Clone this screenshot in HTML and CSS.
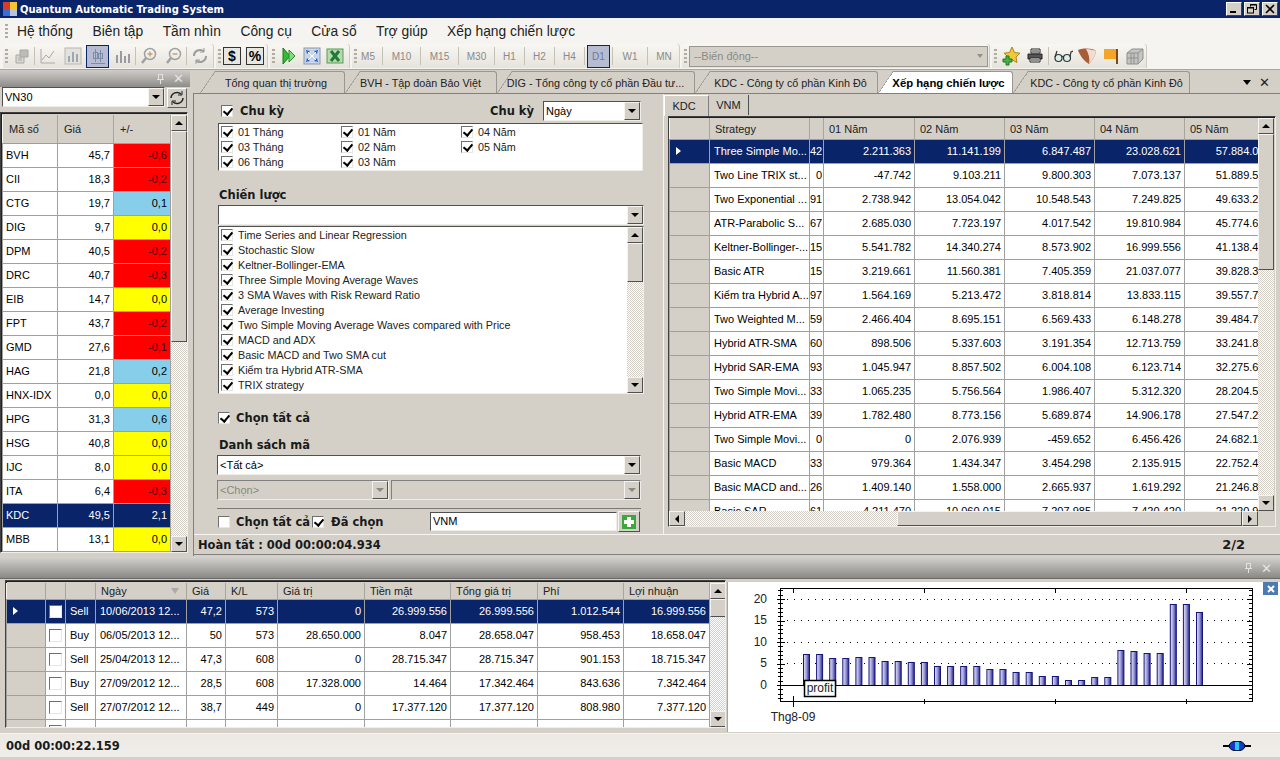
FILE: index.html
```html
<!DOCTYPE html>
<html lang="vi">
<head>
    <meta charset="utf-8">
    <title>Quantum Automatic Trading System</title>
    <link rel="stylesheet" href="styles.css">
</head>
<body>
<div class="app">

    <div class="titlebar">
        <svg class="appicon" width="15" height="14" viewBox="0 0 15 14"><rect x="0" y="0" width="7" height="7" fill="#d43c2c"/><rect x="7" y="0" width="7" height="7" fill="#f4c430"/><rect x="0" y="7" width="7" height="7" fill="#3a6fd8"/><rect x="7" y="7" width="7" height="7" fill="#b8c4dc"/></svg>
        <span class="title">Quantum Automatic Trading System</span>
        <div class="winbtns">
            <span class="winbtn"><svg width="10" height="10"><rect x="1" y="7" width="6" height="2" fill="#000"/></svg></span>
            <span class="winbtn"><svg width="10" height="10" fill="none" stroke="#000"><path d="M3.500 2.500V.5h6v5h-2"/><rect x=".5" y="3.500" width="6" height="5.500"/><path d="M3 1h6M1 4h5"/></svg></span>
            <span class="winbtn"><svg width="10" height="10" stroke="#000" stroke-width="1.600"><path d="M1 1l8 8M9 1l-8 8"/></svg></span>
        </div>
    </div>

    <div class="menubar">
        <span class="grip"></span>
        <span>Hệ thống</span><span>Biên tập</span><span>Tầm nhìn</span><span>Công cụ</span><span>Cửa sổ</span><span>Trợ giúp</span><span>Xếp hạng chiến lược</span>
    </div>

    <div class="toolbar">
        <div class="tgroup g1">
            <span class="grip"></span>
            <span class="tbtn"><svg width="18" height="18" fill="#bdbdb8" stroke="#a8a8a4"><path d="M3 8h8v8H3z" fill="#d8d8d4"/><path d="M7 3h8v7H7z"/><path d="M5 11h4M5 13h4"/></svg></span>
            <i class="tsep"></i>
            <span class="tbtn"><svg width="18" height="18" fill="none" stroke="#a9a9b0"><path d="M2 2v14h14"/><path d="M3 13l4-5 3 3 5-7" stroke="#b0a890"/></svg></span>
            <span class="tbtn"><svg width="18" height="18"><rect x="1" y="1" width="16" height="16" fill="#e4e2dc" stroke="#b8b8b4"/><path d="M4 15V9h2v6zM8 15V5h2v10zM12 15V7h2v8z" fill="#9ea6b4"/></svg></span>
            <span class="tbtn on"><svg width="18" height="18" fill="none" stroke="#7d8ca8"><path d="M2 16.500h14M6.500 2v13M11.500 3v12"/><rect x="4.500" y="5.500" width="4" height="6"/><rect x="9.500" y="6.500" width="4" height="5"/></svg></span>
            <span class="tbtn"><svg width="18" height="18"><path d="M2 16V8h2v8zM6 16V4h2v12zM10 16V9h2v7zM14 16V7h2v9z" fill="#9a9aa2"/></svg></span>
            <i class="tsep"></i>
            <span class="tbtn"><svg width="18" height="18" fill="none" stroke="#a0a0a0" stroke-width="1.500"><circle cx="10" cy="7" r="5.500"/><path d="M6 11l-4 5" stroke-width="2.500"/><path d="M7.500 7h5M10 4.500v5" stroke="#c8a080"/></svg></span>
            <span class="tbtn"><svg width="18" height="18" fill="none" stroke="#a0a0a0" stroke-width="1.500"><circle cx="10" cy="7" r="5.500"/><path d="M6 11l-4 5" stroke-width="2.500"/><path d="M7.500 7h5" stroke="#c8a080"/></svg></span>
            <i class="tsep"></i>
            <span class="tbtn"><svg width="18" height="18" fill="none" stroke="#9c9c9c" stroke-width="2"><path d="M3 9a6 6 0 0 1 10-4.500M15 9a6 6 0 0 1-10 4.500"/><path d="M13 1v4h-4M5 17v-4h4" stroke-width="1"/></svg></span>
        </div>
        <div class="tgroup g2">
            <span class="grip"></span>
            <span class="tbtn boxed bold">$</span>
            <span class="tbtn boxed bold">%</span>
        </div>
        <div class="tgroup g3">
            <span class="grip"></span>
            <span class="tbtn"><svg width="18" height="18"><path d="M3 1l7 8-7 8z" fill="#38b838" stroke="#1c7a1c"/><path d="M9 3l6 6-6 6z" fill="#7ae07a" stroke="#2a8a2a"/></svg></span>
            <span class="tbtn"><svg width="18" height="18"><rect x="1" y="1" width="16" height="16" fill="#c8d4e8" stroke="#8a98b0"/><path d="M3 3l4 1-3 3zM15 3l-4 1 3 3zM3 15l4-1-3-3zM15 15l-4-1 3-3z" fill="#2a64c8"/><path d="M5 5l8 8M13 5l-8 8" stroke="#fff"/></svg></span>
            <span class="tbtn"><svg width="18" height="18"><rect x="1" y="2" width="16" height="14" fill="#b8d8b0" stroke="#5a9a58"/><path d="M5 4l8 10M13 4L5 14" stroke="#1f7a36" stroke-width="3"/></svg></span>
        </div>
        <div class="tgroup g4">
            <span class="grip"></span>
            <span class="tf t1">M5</span><i class="tsep"></i><span class="tf t2">M10</span><i class="tsep"></i><span class="tf t2">M15</span><i class="tsep"></i><span class="tf t30">M30</span><i class="tsep"></i><span class="tf t3">H1</span><i class="tsep"></i><span class="tf t3">H2</span><i class="tsep"></i><span class="tf t3">H4</span><i class="tsep"></i><span class="tf t4 on">D1</span><i class="tsep"></i><span class="tf t5">W1</span><i class="tsep"></i><span class="tf t6">MN</span>
        </div>
        <div class="tgroup g5">
            <span class="grip"></span>
            <div class="varcombo"><span>--Biến động--</span><b class="minidown"></b></div>
        </div>
        <div class="tgroup g6">
            <span class="grip"></span>
            <span class="tbtn"><svg width="20" height="20"><path d="M11 1l2.500 5.500 5.500.7-4 3.800 1 5.500-5-2.800-5 2.800 1-5.500-4-3.800 5.500-.7z" fill="#f0c838" stroke="#a88820"/><path d="M5 10h3v3h3v3H8v3H5v-3H2v-3h3z" fill="#48b048" stroke="#1c7a1c"/></svg></span>
            <span class="tbtn"><svg width="20" height="20"><path d="M6 3h9v4H6z" fill="#fff" stroke="#222"/><path d="M3 8h14v5H3z" fill="#555" stroke="#222"/><path d="M5 12h10v4H5z" fill="#fff" stroke="#222"/><path d="M6 14h8M7 5h7" stroke="#222"/></svg></span>
            <i class="tsep"></i>
            <span class="tbtn"><svg width="20" height="20" fill="none" stroke="#333" stroke-width="1.200"><circle cx="5.500" cy="12" r="3.500" fill="#d8f0e8"/><circle cx="14" cy="12" r="3.500" fill="#d8f0e8"/><path d="M9 11c.5-1 1-1 1.500 0M2 11l2-6M17 11l1-5 2-1"/></svg></span>
            <span class="tbtn"><svg width="20" height="20"><path d="M1 4c6-2 14-2 18 1-1 6-4 10-7 13C7 15 3 10 1 4z" fill="#a85c38"/><path d="M9 3c4 0 8 1 10 2-1 6-4 10-7 13 1-5 0-10-3-15z" fill="#f2dcd0"/></svg></span>
            <span class="tbtn"><svg width="20" height="20"><rect x="3" y="3" width="12" height="10" fill="#f4a428"/><rect x="15" y="3" width="2" height="15" fill="#7a4a18"/></svg></span>
            <span class="tbtn"><svg width="20" height="20" fill="#c4c4c0" stroke="#909090"><path d="M2 7l5-4h11v10l-5 5H2z"/><path d="M2 7h11v11M13 7l5-4M6 7v11M9 7v11M2 12h11" fill="none"/></svg></span>
        </div>
    </div>

    <div class="main">
        <aside class="leftdock">
            <div class="dockhead"><span class="pin"></span><span class="closex">✕</span></div>
            <div class="dockrow">
                <div class="combo vn"><span class="comboval">VN30</span><b class="ddbtn"></b></div>
                <span class="refresh"><svg width="16" height="16" fill="none" stroke="#222" stroke-width="1.500"><path d="M2 8a6 6 0 0 1 10-4M14 8a6 6 0 0 1-10 4"/><path d="M13 1v4H9M3 15v-4h4" stroke-width="1"/></svg></span>
            </div>
            <div class="gridframe leftgrid">
                <table class="grid codes">
                    <thead><tr><th>Mã số</th><th>Giá</th><th>+/-</th></tr></thead>
                    <tbody>
                        <tr><td>BVH</td><td class="n">45,7</td><td class="n red">-0,6</td></tr>
                        <tr><td>CII</td><td class="n">18,3</td><td class="n red">-0,2</td></tr>
                        <tr><td>CTG</td><td class="n">19,7</td><td class="n blue">0,1</td></tr>
                        <tr><td>DIG</td><td class="n">9,7</td><td class="n yel">0,0</td></tr>
                        <tr><td>DPM</td><td class="n">40,5</td><td class="n red">-0,2</td></tr>
                        <tr><td>DRC</td><td class="n">40,7</td><td class="n red">-0,3</td></tr>
                        <tr><td>EIB</td><td class="n">14,7</td><td class="n yel">0,0</td></tr>
                        <tr><td>FPT</td><td class="n">43,7</td><td class="n red">-0,2</td></tr>
                        <tr><td>GMD</td><td class="n">27,6</td><td class="n red">-0,1</td></tr>
                        <tr><td>HAG</td><td class="n">21,8</td><td class="n blue">0,2</td></tr>
                        <tr><td>HNX-IDX</td><td class="n">0,0</td><td class="n yel">0,0</td></tr>
                        <tr><td>HPG</td><td class="n">31,3</td><td class="n blue">0,6</td></tr>
                        <tr><td>HSG</td><td class="n">40,8</td><td class="n yel">0,0</td></tr>
                        <tr><td>IJC</td><td class="n">8,0</td><td class="n yel">0,0</td></tr>
                        <tr><td>ITA</td><td class="n">6,4</td><td class="n red">-0,3</td></tr>
                        <tr class="sel"><td>KDC</td><td class="n">49,5</td><td class="n">2,1</td></tr>
                        <tr><td>MBB</td><td class="n">13,1</td><td class="n yel">0,0</td></tr>
                        <tr><td></td><td></td><td class="red"></td></tr>
                    </tbody>
                </table>
                <div class="vscroll"><b class="sbtn up"></b><div class="track"><div class="thumb th-left"></div></div><b class="sbtn down"></b></div>
            </div>
        </aside>

        <section class="docs">
            <div class="tabstrip">
                <span class="tab">Tổng quan thị trường</span>
                <span class="tab">BVH - Tập đoàn Bảo Việt</span>
                <span class="tab">DIG - Tổng công ty cổ phần Đầu tư...</span>
                <span class="tab">KDC - Công ty cổ phần Kinh Đô</span>
                <span class="tab active">Xếp hạng chiến lược</span>
                <span class="tab">KDC - Công ty cổ phần Kinh Đô</span>
                <span class="tabtools"><b class="tabdown"></b><span class="closex dark">✕</span></span>
            </div>
            <div class="docbody">
                <div class="split">
                    <div class="settings">
                        <div class="row headrow">
                            <span class="cb big on"></span><span class="lbl">Chu kỳ</span>
                            <span class="lbl push">Chu kỳ</span>
                            <div class="combo ngay"><span class="comboval">Ngày</span><b class="ddbtn"></b></div>
                        </div>
                        <div class="listbox periods">
                            <label><span class="cb on"></span>01 Tháng</label><label><span class="cb on"></span>01 Năm</label><label><span class="cb on"></span>04 Năm</label>
                            <label><span class="cb on"></span>03 Tháng</label><label><span class="cb on"></span>02 Năm</label><label><span class="cb on"></span>05 Năm</label>
                            <label><span class="cb on"></span>06 Tháng</label><label><span class="cb on"></span>03 Năm</label>
                        </div>
                        <div class="lbl sect1">Chiến lược</div>
                        <div class="combo strat"><span class="comboval"></span><b class="ddbtn"></b></div>
                        <div class="listbox strategies">
                            <div class="items">
                                <label><span class="cb on"></span>Time Series and Linear Regression</label>
                                <label><span class="cb on"></span>Stochastic Slow</label>
                                <label><span class="cb on"></span>Keltner-Bollinger-EMA</label>
                                <label><span class="cb on"></span>Three Simple Moving Average Waves</label>
                                <label><span class="cb on"></span>3 SMA Waves with Risk Reward Ratio</label>
                                <label><span class="cb on"></span>Average Investing</label>
                                <label><span class="cb on"></span>Two Simple Moving Average Waves compared with Price</label>
                                <label><span class="cb on"></span>MACD and ADX</label>
                                <label><span class="cb on"></span>Basic MACD and Two SMA cut</label>
                                <label><span class="cb on"></span>Kiểm tra Hybrid ATR-SMA</label>
                                <label><span class="cb on"></span>TRIX strategy</label>
                            </div>
                            <div class="vscroll"><b class="sbtn up"></b><div class="track"><div class="thumb th-strat"></div></div><b class="sbtn down"></b></div>
                        </div>
                        <div class="row allrow"><span class="cb big on"></span><span class="lbl">Chọn tất cả</span></div>
                        <div class="lbl sect2">Danh sách mã</div>
                        <div class="combo codesel"><span class="comboval">&lt;Tất cả&gt;</span><b class="ddbtn"></b></div>
                        <div class="row disrow">
                            <div class="combo dis d1"><span class="comboval">&lt;Chọn&gt;</span><b class="ddbtn"></b></div>
                            <div class="combo dis d2"><span class="comboval"></span><b class="ddbtn"></b></div>
                        </div>
                        <div class="row lastrow">
                            <span class="cb big"></span><span class="lbl l-all">Chọn tất cả</span>
                            <span class="cb big on"></span><span class="lbl l-sel">Đã chọn</span>
                            <div class="textbox">VNM</div>
                            <span class="addbtn"><svg width="14" height="14"><rect width="14" height="14" fill="#3aa83a"/><path d="M5 2h4v3h3v4H9v3H5V9H2V5h3z" fill="#fff"/></svg></span>
                        </div>
                    </div>
                    <div class="results">
                        <div class="subtabs"><span class="subtab cur">KDC</span><span class="subtab">VNM</span></div>
                        <div class="gridframe rightgrid">
                            <div class="gridclip">
                                <table class="grid ranks">
                                    <thead><tr><th></th><th>Strategy</th><th></th><th>01 Năm</th><th>02 Năm</th><th>03 Năm</th><th>04 Năm</th><th>05 Năm</th></tr></thead>
                                    <tbody>
                                        <tr class="sel"><td class="rh"><i class="arrow"></i></td><td>Three Simple Mo...</td><td class="n cut">42</td><td class="n">2.211.363</td><td class="n">11.141.199</td><td class="n">6.847.487</td><td class="n">23.028.621</td><td class="n">57.884.0</td></tr>
                                        <tr><td class="rh"></td><td>Two Line TRIX st...</td><td class="n cut">0</td><td class="n">-47.742</td><td class="n">9.103.211</td><td class="n">9.800.303</td><td class="n">7.073.137</td><td class="n">51.889.5</td></tr>
                                        <tr><td class="rh"></td><td>Two Exponential ...</td><td class="n cut">91</td><td class="n">2.738.942</td><td class="n">13.054.042</td><td class="n">10.548.543</td><td class="n">7.249.825</td><td class="n">49.633.2</td></tr>
                                        <tr><td class="rh"></td><td>ATR-Parabolic S...</td><td class="n cut">67</td><td class="n">2.685.030</td><td class="n">7.723.197</td><td class="n">4.017.542</td><td class="n">19.810.984</td><td class="n">45.774.6</td></tr>
                                        <tr><td class="rh"></td><td>Keltner-Bollinger-...</td><td class="n cut">15</td><td class="n">5.541.782</td><td class="n">14.340.274</td><td class="n">8.573.902</td><td class="n">16.999.556</td><td class="n">41.138.4</td></tr>
                                        <tr><td class="rh"></td><td>Basic ATR</td><td class="n cut">15</td><td class="n">3.219.661</td><td class="n">11.560.381</td><td class="n">7.405.359</td><td class="n">21.037.077</td><td class="n">39.828.3</td></tr>
                                        <tr><td class="rh"></td><td>Kiểm tra Hybrid A...</td><td class="n cut">97</td><td class="n">1.564.169</td><td class="n">5.213.472</td><td class="n">3.818.814</td><td class="n">13.833.115</td><td class="n">39.557.7</td></tr>
                                        <tr><td class="rh"></td><td>Two Weighted M...</td><td class="n cut">59</td><td class="n">2.466.404</td><td class="n">8.695.151</td><td class="n">6.569.433</td><td class="n">6.148.278</td><td class="n">39.484.7</td></tr>
                                        <tr><td class="rh"></td><td>Hybrid ATR-SMA</td><td class="n cut">60</td><td class="n">898.506</td><td class="n">5.337.603</td><td class="n">3.191.354</td><td class="n">12.713.759</td><td class="n">33.241.8</td></tr>
                                        <tr><td class="rh"></td><td>Hybrid SAR-EMA</td><td class="n cut">93</td><td class="n">1.045.947</td><td class="n">8.857.502</td><td class="n">6.004.108</td><td class="n">6.123.714</td><td class="n">32.275.6</td></tr>
                                        <tr><td class="rh"></td><td>Two Simple Movi...</td><td class="n cut">33</td><td class="n">1.065.235</td><td class="n">5.756.564</td><td class="n">1.986.407</td><td class="n">5.312.320</td><td class="n">28.204.5</td></tr>
                                        <tr><td class="rh"></td><td>Hybrid ATR-EMA</td><td class="n cut">39</td><td class="n">1.782.480</td><td class="n">8.773.156</td><td class="n">5.689.874</td><td class="n">14.906.178</td><td class="n">27.547.2</td></tr>
                                        <tr><td class="rh"></td><td>Two Simple Movi...</td><td class="n cut">0</td><td class="n">0</td><td class="n">2.076.939</td><td class="n">-459.652</td><td class="n">6.456.426</td><td class="n">24.682.1</td></tr>
                                        <tr><td class="rh"></td><td>Basic MACD</td><td class="n cut">33</td><td class="n">979.364</td><td class="n">1.434.347</td><td class="n">3.454.298</td><td class="n">2.135.915</td><td class="n">22.752.4</td></tr>
                                        <tr><td class="rh"></td><td>Basic MACD and...</td><td class="n cut">26</td><td class="n">1.409.140</td><td class="n">1.558.000</td><td class="n">2.665.937</td><td class="n">1.619.292</td><td class="n">21.246.8</td></tr>
                                        <tr><td class="rh"></td><td>Basic SAR</td><td class="n cut">61</td><td class="n">4.211.470</td><td class="n">10.060.015</td><td class="n">7.207.985</td><td class="n">7.420.420</td><td class="n">21.220.9</td></tr>
                                    </tbody>
                                </table>
                                <div class="hscroll"><b class="sbtn left"></b><div class="htrack"><div class="hthumb"></div></div><b class="sbtn right"></b></div>
                            </div>
                            <div class="vscroll vs-right"><b class="sbtn up"></b><div class="track"><div class="thumb th-right"></div></div><b class="sbtn down"></b></div>
                        </div>
                    </div>
                </div>
                <div class="docstatus"><span class="lbl">Hoàn tất : 00d 00:00:04.934</span><span class="lbl pager">2/2</span></div>
            </div>
        </section>
    </div>

    <div class="splitbar"><span class="pin"></span><span class="closex">✕</span></div>

    <div class="bottom">
        <div class="gridframe trades">
            <table class="grid orders">
                <thead><tr><th></th><th></th><th></th><th>Ngày<i class="sortmark"></i></th><th>Giá</th><th>K/L</th><th>Giá trị</th><th>Tiền mặt</th><th>Tổng giá trị</th><th>Phí</th><th>Lợi nhuận</th></tr></thead>
                <tbody>
                    <tr class="sel"><td class="rh"><i class="arrow"></i></td><td class="c"><span class="cb"></span></td><td>Sell</td><td>10/06/2013 12...</td><td class="n">47,2</td><td class="n">573</td><td class="n">0</td><td class="n">26.999.556</td><td class="n">26.999.556</td><td class="n">1.012.544</td><td class="n">16.999.556</td></tr>
                    <tr><td class="rh"></td><td class="c"><span class="cb"></span></td><td>Buy</td><td>06/05/2013 12...</td><td class="n">50</td><td class="n">573</td><td class="n">28.650.000</td><td class="n">8.047</td><td class="n">28.658.047</td><td class="n">958.453</td><td class="n">18.658.047</td></tr>
                    <tr><td class="rh"></td><td class="c"><span class="cb"></span></td><td>Sell</td><td>25/04/2013 12...</td><td class="n">47,3</td><td class="n">608</td><td class="n">0</td><td class="n">28.715.347</td><td class="n">28.715.347</td><td class="n">901.153</td><td class="n">18.715.347</td></tr>
                    <tr><td class="rh"></td><td class="c"><span class="cb"></span></td><td>Buy</td><td>27/09/2012 12...</td><td class="n">28,5</td><td class="n">608</td><td class="n">17.328.000</td><td class="n">14.464</td><td class="n">17.342.464</td><td class="n">843.636</td><td class="n">7.342.464</td></tr>
                    <tr><td class="rh"></td><td class="c"><span class="cb"></span></td><td>Sell</td><td>27/07/2012 12...</td><td class="n">38,7</td><td class="n">449</td><td class="n">0</td><td class="n">17.377.120</td><td class="n">17.377.120</td><td class="n">808.980</td><td class="n">7.377.120</td></tr>
                    <tr><td class="rh"></td><td class="c"><span class="cb"></span></td><td></td><td></td><td></td><td></td><td></td><td></td><td></td><td></td><td></td></tr>
                </tbody>
            </table>
            <div class="vscroll"><b class="sbtn up"></b><div class="track"><div class="thumb th-orders"></div></div><b class="sbtn down"></b></div>
        </div>
        <div class="chartbox">
            <svg class="chart" width="553" height="150" viewBox="727 582 553 150">
                <defs>
                    <linearGradient id="barfill" x1="0" x2="1" y1="0" y2="0"><stop offset="0" stop-color="#e8e8f8"/><stop offset=".5" stop-color="#9a9ad8"/><stop offset="1" stop-color="#22228c"/></linearGradient>
                </defs>
                <path class="dots" d="M779 599.500H1251M779 620.500H1251M779 642.500H1251M779 663.500H1251"/>
                <g id="bars"></g>
                <rect class="frame" x="779.500" y="588.500" width="472" height="113"/>
                <path class="axis" id="ticks"/>
                <text class="tick" x="766" y="603" text-anchor="end">20</text>
                <text class="tick" x="766" y="624" text-anchor="end">15</text>
                <text class="tick" x="766" y="646" text-anchor="end">10</text>
                <text class="tick" x="766" y="667" text-anchor="end">5</text>
                <text class="tick" x="766" y="689" text-anchor="end">0</text>
                <text class="tick" x="792" y="721" text-anchor="middle">Thg8-09</text>
                <rect class="legendbox" x="803.500" y="680.500" width="31" height="16"/>
                <text class="tick" x="819" y="692" text-anchor="middle">profit</text>
            </svg>
            <span class="chartclose"><svg width="10" height="10" stroke="#fff" stroke-width="2"><path d="M2 2l6 6M8 2l-6 6"/></svg></span>
        </div>
    </div>

    <div class="statusbar">
        <span class="lbl">00d 00:00:22.159</span>
        <svg class="statusicon" width="28" height="10" viewBox="0 0 28 10"><path d="M0 5h28" stroke="#000" stroke-width="2"/><ellipse cx="14" cy="5" rx="8" ry="5" fill="#1438c8" stroke="#000"/><rect x="12" y="1" width="4" height="8" fill="#28c8f0"/></svg>
    </div>
</div>
<script src="chart.js"></script>
</body>
</html>
```
FILE: styles.css
```css
* { box-sizing: border-box; }

html, body {
    margin: 0;
    padding: 0;
}

body {
    font-family: "Liberation Sans", Tahoma, sans-serif;
    font-size: 11px;
    color: #000;
    background: #d4d0c8;
}

.app {
    width: 1280px;
    height: 760px;
    overflow: hidden;
    display: flex;
    flex-direction: column;
}

/* title bar */
.titlebar {
    height: 18px;
    flex: none;
    background: #0a246a;
    display: flex;
    align-items: center;
    padding: 0 2px 0 3px;
    color: #fff;
}
.appicon { margin-right: 2px; }
.title {
    font-family: "DejaVu Sans", sans-serif;
    font-weight: bold;
    font-size: 10px;
}
.winbtns { margin-left: auto; display: flex; gap: 0; }
.winbtn {
    width: 16px;
    height: 14px;
    margin-left: 2px;
    background: #d4d0c8;
    border: 1px solid;
    border-color: #fff #404040 #404040 #fff;
    display: flex;
    align-items: center;
    justify-content: center;
}

/* menu */
.menubar {
    height: 26px;
    flex: none;
    background: #f6f4f0;
    display: flex;
    align-items: center;
    font-size: 13.8px;
    color: #222;
    padding-left: 5px;
    gap: 19.5px;
}
.menubar .grip { margin-right: -10.5px; }

.grip {
    display: inline-block;
    width: 3px;
    height: 14px;
    flex: none;
    background: repeating-linear-gradient(to bottom, #b0aca4 0 2px, transparent 2px 4px);
}

/* toolbar */
.toolbar {
    height: 25px;
    flex: none;
    display: flex;
    gap: 2px;
    padding-left: 3px;
    background: #f6f4f0;
}
.tgroup {
    height: 24px;
    display: flex;
    align-items: center;
    gap: 2px;
    padding-left: 2px;
    background: linear-gradient(to bottom, #f8f7f3, #e6e3db);
    border-radius: 3px 3px 0 0;
    box-shadow: inset -1px 0 #cfccc4;
}
.g1 { width: 211px; }
.g2 { width: 52px; }
.g3 { width: 80px; gap: 0; padding-left: 2px; }
.g3 .grip { margin-right: 2px; }
.g4 { width: 328px; gap: 1px; }
.g4 .grip { margin-right: -2px; }
.g4 .tsep { margin: 0 1px; }
.g5 { width: 308px; }
.g6 { width: 155px; gap: 1px; }
.g6 .grip { margin-right: 1px; }
.g6 .tsep { margin: 0 1px; }

.tbtn {
    width: 23px;
    height: 23px;
    display: flex;
    align-items: center;
    justify-content: center;
    flex: none;
}
.tbtn.on { background: #b6bdd2; border: 1px solid #0a246a; }
.tbtn.boxed {
    width: 18px;
    height: 18px;
    margin: 0 3px 0 0;
    background: #e8e6e0;
    border: 1px solid #333;
    font-size: 14px;
}
.bold { font-weight: bold; }
.tsep {
    width: 1px;
    height: 18px;
    background: #c4c1b9;
    flex: none;
    margin: 0 -1px;
}
.tf {
    height: 23px;
    display: flex;
    align-items: center;
    justify-content: center;
    font-size: 10px;
    color: #8a8a8a;
    flex: none;
}
.t1 { width: 24px; }
.t2 { width: 33px; }
.t30 { width: 31px; }
.t3 { width: 25px; }
.t4 { width: 23px; }
.t5 { width: 30px; }
.t6 { width: 28px; }
.tf.on { background: #b6bdd2; border: 1px solid #0a246a; color: #6d7a98; }

.varcombo {
    width: 299px;
    height: 21px;
    background: #d4d0c8;
    border: 1px solid #9a978f;
    display: flex;
    align-items: center;
    justify-content: space-between;
    padding: 0 4px;
    color: #8a8a84;
}
.minidown {
    width: 0;
    height: 0;
    border: 3px solid transparent;
    border-top: 4px solid #909090;
    border-bottom: 0;
}

/* main area */
.main {
    height: 487px;
    flex: none;
    display: flex;
    border-top: 1px solid #a8a59d;
}
.leftdock {
    width: 190px;
    flex: none;
    display: flex;
    flex-direction: column;
}
.dockhead {
    height: 17px;
    flex: none;
    background: linear-gradient(to bottom, #cfcdc9, #8e8c88);
    display: flex;
    justify-content: flex-end;
    align-items: center;
    gap: 9px;
    padding-right: 6px;
}
.pin {
    width: 7px;
    height: 10px;
    background:
        linear-gradient(#e4e2de, #e4e2de) 3px 6px / 1px 4px no-repeat,
        linear-gradient(#e4e2de, #e4e2de) 0 5px / 7px 1px no-repeat,
        linear-gradient(#e4e2de, #e4e2de) 1px 0 / 1px 5px no-repeat,
        linear-gradient(#e4e2de, #e4e2de) 5px 0 / 1px 5px no-repeat,
        linear-gradient(#e4e2de, #e4e2de) 1px 0 / 5px 1px no-repeat;
}
.closex {
    color: #e6e4e0;
    font-family: "DejaVu Sans", sans-serif;
    font-size: 13px;
    line-height: 1;
}
.closex.dark { color: #222; }
.dockrow {
    display: flex;
    gap: 2px;
    padding: 0 2px;
    height: 25px;
    flex: none;
    background: #d4d0c8;
}
.refresh {
    width: 20px;
    height: 20px;
    margin-top: 1px;
    background: #d4d0c8;
    border: 1px solid;
    border-color: #fff #606060 #606060 #fff;
    display: flex;
    align-items: center;
    justify-content: center;
}

/* combos */
.combo {
    height: 20px;
    background: #fff;
    border: 1px solid;
    border-color: #505050 #f0eee8 #f0eee8 #505050;
    display: flex;
    align-items: stretch;
    flex: none;
}
.comboval {
    flex: 1;
    padding-left: 2px;
    line-height: 18px;
    overflow: hidden;
    white-space: nowrap;
}
.ddbtn {
    width: 16px;
    flex: none;
    background: #d4d0c8;
    border: 1px solid;
    border-color: #f6f4f0 #505050 #505050 #f6f4f0;
    display: flex;
    align-items: center;
    justify-content: center;
}
.ddbtn::after {
    content: "";
    border: 4px solid transparent;
    border-top: 4px solid #000;
    border-bottom: 0;
}
.vn { width: 163px; }
.combo.dis { background: #d4d0c8; color: #8a8880; border-color: #808080 #f0eee8 #f0eee8 #808080; }
.combo.dis .ddbtn::after { border-top-color: #8a8880; }

/* scrollbars */
.vscroll {
    width: 16px;
    flex: none;
    display: flex;
    flex-direction: column;
}
.vs-right { margin-bottom: 15px; }
.track {
    flex: 1;
    background: repeating-conic-gradient(#fff 0 25%, #d4d0c8 0 50%) 0 0 / 2px 2px;
}
.thumb, .hthumb {
    background: #d4d0c8;
    border: 1px solid;
    border-color: #f6f4f0 #505050 #505050 #f6f4f0;
}
.sbtn {
    flex: none;
    width: 16px;
    height: 16px;
    display: flex;
    align-items: center;
    justify-content: center;
    background: #d4d0c8;
    border: 1px solid;
    border-color: #f6f4f0 #505050 #505050 #f6f4f0;
}
.sbtn::after { content: ""; border: 4px solid transparent; }
.sbtn.up::after { border-bottom: 4px solid #000; border-top: 0; }
.sbtn.down::after { border-top: 4px solid #000; border-bottom: 0; }
.sbtn.left::after { border-right: 4px solid #000; border-left: 0; }
.sbtn.right::after { border-left: 4px solid #000; border-right: 0; }
.th-left { height: 211px; }
.th-strat { height: 39px; }
.th-right { height: 136px; }
.th-orders { height: 18px; }

/* grids */
.gridframe {
    display: flex;
    border: 1px solid;
    border-color: #404040 #f0eee8 #f0eee8 #404040;
    background: #d4d0c8;
    overflow: hidden;
    box-shadow: inset 1px 1px #202020;
}
.grid {
    border-collapse: collapse;
    table-layout: fixed;
    background: #fff;
    flex: none;
    align-self: flex-start;
}
.grid th {
    background: #d4d0c8;
    font-weight: normal;
    text-align: left;
    color: #222;
    padding: 0 0 0 5px;
    border-right: 1px solid #a8a59d;
    border-left: 1px solid #f6f4f0;
    border-bottom: 1px solid #a09d95;
    white-space: nowrap;
    overflow: hidden;
}
.grid td {
    height: 24px;
    padding: 0 3px 0 4px;
    border: 1px solid #a0a0a0;
    white-space: nowrap;
    overflow: hidden;
}
.grid .n { text-align: right; }
.grid .c { text-align: center; padding: 0; }
.grid .rh {
    background: #d4d0c8;
    border-top-color: #f6f4f0;
    padding-left: 6px;
}
.grid .cut { padding: 0 1px 0 0; }
.grid tr.sel td {
    background: #0a246a;
    color: #fff;
}
.grid .red { background: #ff0000; color: #400; }
.grid .blue { background: #87ceeb; }
.grid .yel { background: #ffff00; }
.arrow {
    display: block;
    width: 0;
    height: 0;
    border: 4px solid transparent;
    border-left: 5px solid #fff;
    border-right: 0;
}

.leftgrid {
    flex: 1;
    min-height: 0;
    margin-bottom: 3px;
    padding: 2px 0 0 1px;
    width: 188px;
}
.codes { width: 168px; }
.codes th { height: 28px; padding-left: 6px; }
.codes td { padding-left: 3px; }
.codes th:nth-child(1) { width: 55px; }
.codes th:nth-child(2) { width: 56px; }
.codes th:nth-child(3) { width: 57px; }

/* documents */
.docs {
    flex: 1;
    min-width: 0;
    display: flex;
    flex-direction: column;
    padding-left: 3px;
}
.tabstrip {
    height: 23px;
    flex: none;
    margin-top: 1px;
    padding-left: 7px;
    display: grid;
    grid-template-columns: 145px 152px 198px 183px 135px 177px 1fr;
    align-items: stretch;
    border-bottom: 1px solid #808080;
}
.tab {
    position: relative;
    font-size: 10.8px;
    color: #222;
    display: flex;
    align-items: center;
    justify-content: center;
    white-space: nowrap;
    background: #d4d0c8;
    border-top: 1px solid #9a978f;
    border-right: 1px solid #9a978f;
    border-radius: 0 3px 0 0;
    clip-path: polygon(15px 0, 100% 0, 100% 100%, 0 100%);
}
.tab:nth-child(1) { padding-left: 8px; }
.tab:nth-child(4) { padding-left: 9px; }
.tab:nth-child(6) { padding-left: 11px; }
.tab::before {
    content: "";
    position: absolute;
    left: 0;
    top: -1px;
    bottom: 0;
    width: 15px;
    background: linear-gradient(to top left, transparent 47%, #9a978f 47%, #9a978f 55%, transparent 55%);
}
.tab.active {
    background: #fff;
    font-weight: bold;
    color: #000;
    font-size: 11.3px;
    padding-left: 7px;
}
.tabtools {
    display: flex;
    justify-content: flex-end;
    align-items: center;
    gap: 8px;
    padding-right: 10px;
}
.tabdown {
    border: 4px solid transparent;
    border-top: 5px solid #000;
    border-bottom: 0;
}
.docbody {
    flex: 1;
    min-height: 0;
    display: flex;
    flex-direction: column;
    border-left: 1px solid #808080;
}
.split {
    flex: 1;
    min-height: 0;
    display: flex;
}

/* settings form */
.settings {
    width: 470px;
    flex: none;
    padding: 7px 0 0 24px;
    display: flex;
    flex-direction: column;
    border-right: 1px solid #f6f4f0;
}
.row { display: flex; align-items: center; }
.lbl {
    font-family: "DejaVu Sans", sans-serif;
    font-weight: bold;
    font-size: 11.5px;
    color: #1a1a1a;
    white-space: nowrap;
}
.cb {
    display: inline-block;
    position: relative;
    width: 12px;
    height: 12px;
    flex: none;
    background: #fff;
    border: 1px solid;
    border-color: #707070 #e8e6e0 #e8e6e0 #707070;
}
.cb.on::after {
    content: "";
    position: absolute;
    left: 3px;
    top: 0;
    width: 4px;
    height: 7px;
    border: solid #000;
    border-width: 0 2px 2px 0;
    transform: rotate(40deg);
}
.headrow { height: 20px; padding-left: 3px; gap: 7px; }
.push { margin-left: auto; margin-right: 2px; }
.ngay { width: 98px; margin-right: 22px; }
.listbox {
    background: #fff;
    border: 1px solid;
    border-color: #505050 #f0eee8 #f0eee8 #505050;
    font-size: 10.8px;
}
.listbox label {
    display: flex;
    align-items: center;
    gap: 5px;
    height: 15px;
    color: #222;
    white-space: nowrap;
}
.periods {
    margin-top: 2px;
    width: 425px;
    height: 48px;
    padding: 0 0 0 2px;
    display: grid;
    grid-template-columns: 120px 120px 120px;
    grid-auto-rows: 15px;
}
.sect1 { margin-top: 17px; height: 17px; padding-left: 1px; }
.strat { width: 426px; }
.strategies {
    margin-top: 1px;
    width: 426px;
    height: 168px;
    display: flex;
    justify-content: space-between;
}
.items { padding: 0 0 0 2px; }
.allrow { margin-top: 16px; gap: 6px; height: 15px; }
.sect2 { margin-top: 12px; height: 18px; padding-left: 1px; line-height: 16px; }
.codesel { width: 424px; margin-left: -1px; }
.disrow { margin: 5px 0 0 -1px; gap: 2px; width: 424px; }
.d1 { width: 172px; }
.d2 { width: 250px; }
.lastrow {
    margin: 8px 0 0 -1px;
    width: 424px;
    padding: 2px 0 0 1px;
    height: 24px;
    border-top: 1px solid #7c7a74;
}
.l-all { margin-left: 6px; width: 76px; }
.l-sel { margin-left: 7px; width: 99px; }
.textbox {
    width: 187px;
    height: 19px;
    background: #fff;
    border: 1px solid;
    border-color: #505050 #f0eee8 #f0eee8 #505050;
    line-height: 16px;
    padding-left: 2px;
}
.addbtn {
    width: 22px;
    height: 21px;
    margin-left: 1px;
    background: #d4d0c8;
    border: 1px solid;
    border-color: #f6f4f0 #505050 #505050 #f6f4f0;
    display: flex;
    align-items: center;
    justify-content: center;
}

/* results on the right */
.results {
    flex: 1;
    min-width: 0;
    padding: 1px 0 0 0;
    display: flex;
    flex-direction: column;
}
.subtabs { display: flex; height: 21px; flex: none; }
.subtab {
    width: 40px;
    height: 20px;
    background: #d4d0c8;
    display: flex;
    align-items: center;
    justify-content: center;
    border-right: 1px solid #505050;
    color: #222;
}
.subtab.cur {
    width: 45px;
    padding-right: 5px;
    border-top: 1px solid #fff;
    border-left: 1px solid #fff;
    border-right: 1px solid #808080;
    height: 21px;
}
.rightgrid {
    height: 411px;
    flex: none;
    margin-left: 4px;
    width: 608px;
    padding: 1px 0 0 0;
}
.gridclip {
    width: 589px;
    flex: none;
    display: flex;
    flex-direction: column;
    min-height: 0;
    overflow: hidden;
    position: relative;
}
.ranks { width: 589px; }
.ranks th { height: 21px; padding-top: 2px; }
.ranks th:nth-child(1) { width: 40px; }
.ranks th:nth-child(2) { width: 100px; }
.ranks th:nth-child(3) { width: 14px; }
.ranks th:nth-child(4) { width: 91px; }
.ranks th:nth-child(5) { width: 90px; }
.ranks th:nth-child(6) { width: 90px; }
.ranks th:nth-child(7) { width: 90px; }
.ranks th:nth-child(8) { width: 74px; }
.ranks .n:last-child { padding-right: 0; border-right: 0; }
.hscroll {
    position: absolute;
    left: 0;
    right: 0;
    bottom: 0;
    height: 15px;
    display: flex;
    background: #d4d0c8;
}
.hscroll .sbtn { height: 15px; }
.htrack {
    flex: 1;
    background: repeating-conic-gradient(#fff 0 25%, #d4d0c8 0 50%) 0 0 / 2px 2px;
    display: flex;
    justify-content: flex-end;
}
.hthumb { width: 345px; }

.docstatus {
    height: 21px;
    flex: none;
    margin-bottom: 1px;
    display: flex;
    align-items: center;
    justify-content: space-between;
    padding: 0 35px 0 4px;
    border-top: 1px solid #f6f4f0;
    border-bottom: 1px solid #808080;
}
.pager { font-size: 13px; }

/* bottom */
.splitbar {
    height: 21px;
    flex: none;
    margin-top: 2px;
    background: linear-gradient(to bottom, #d0cecb 0, #8a8884 100%);
    border-bottom: 1px solid #6c6a66;
    display: flex;
    justify-content: flex-end;
    align-items: center;
    gap: 9px;
    padding-right: 8px;
}
.bottom {
    height: 154px;
    flex: none;
    display: flex;
    padding: 1px 0 0 5px;
    background: #d4d0c8;
}
.trades {
    width: 721px;
    height: 148px;
    padding: 2px 0 0 0;
    flex: none;
}
.orders { width: 703px; }
.orders th { height: 16px; }
.orders th:nth-child(1) { width: 39px; }
.orders th:nth-child(2) { width: 20px; }
.orders th:nth-child(3) { width: 30px; }
.orders th:nth-child(4) { width: 91px; position: relative; }
.orders th:nth-child(5) { width: 39px; }
.orders th:nth-child(6) { width: 52px; }
.orders th:nth-child(7) { width: 87px; }
.orders th:nth-child(8) { width: 86px; }
.orders th:nth-child(9) { width: 87px; }
.orders th:nth-child(10) { width: 86px; }
.orders th:nth-child(11) { width: 86px; }
.orders .cb { width: 13px; height: 13px; vertical-align: middle; }
.sortmark {
    position: absolute;
    right: 7px;
    top: 5px;
    border: 4px solid transparent;
    border-top: 6px solid #aaa;
    border-bottom: 0;
}
.chartbox {
    position: relative;
    flex: none;
    width: 553px;
    height: 150px;
    margin: 2px 0 0 1px;
    background: #fff;
    border-left: 1px solid #a8a59d;
}
.chart { display: block; }
.dots { stroke: #000; stroke-dasharray: 1 6; fill: none; }
.frame { fill: none; stroke: #000; }
.axis { stroke: #000; fill: none; }
.tick {
    font-family: "Liberation Sans", sans-serif;
    font-size: 12px;
    fill: #222;
}
.legendbox { fill: #fff; stroke: #000; stroke-width: 1.500; }
.bar { fill: url(#barfill); stroke: #14147a; }
.chartclose {
    position: absolute;
    top: 0;
    right: 2px;
    width: 15px;
    height: 13px;
    background: #4d7ab0;
    display: flex;
    align-items: center;
    justify-content: center;
}

.statusbar {
    flex: 1;
    min-height: 0;
    display: flex;
    align-items: center;
    justify-content: space-between;
    padding: 0 29px 0 6px;
    background: linear-gradient(to bottom, #ece9e4, #f0eeea);
    border-top: 1px solid #f6f4f0;
    border-bottom: 3px solid #d4d0c8;
}
```
FILE: chart.js
```js
// bar tops in screen coordinates, zero line is at y=685
var tops = [654, 654, 658, 658, 657, 657, 661, 661, 662, 662, 666, 666, 666, 666, 669, 669, 672, 672, 676, 676, 680, 680, 677, 677, 650, 651, 653, 653, 604, 604, 612];
var zero = 685;
var bars = document.getElementById('bars');
tops.forEach(function (top, i) {
    var r = document.createElementNS('http://www.w3.org/2000/svg', 'rect');
    r.setAttribute('class', 'bar');
    r.setAttribute('x', 802.5 + i * 13.1);
    r.setAttribute('y', top + 0.5);
    r.setAttribute('width', 6);
    r.setAttribute('height', zero - top);
    bars.appendChild(r);
});

// axis: zero line, time ticks, value ticks down both sides
var d = 'M779 685.5H1251';
[792.5, 923.5, 1054.5, 1185.5].forEach(function (x, i) {
    d += 'M' + x + ' 588v5';
    d += i == 0 ? 'M' + x + ' 696v11' : 'M' + x + ' 699v5';
});
for (var k = -3; k <= 22; k++) {
    var y = Math.round(zero - k * 4.3) + 0.5;
    var major = k % 5 == 0;
    if (y < 589 || y > 701) continue;
    d += 'M' + (major ? 776 : 777) + ' ' + y + 'H' + (major ? 784 : 782);
    d += 'M' + (major ? 1246 : 1248) + ' ' + y + 'H1251';
}
document.getElementById('ticks').setAttribute('d', d);
```
